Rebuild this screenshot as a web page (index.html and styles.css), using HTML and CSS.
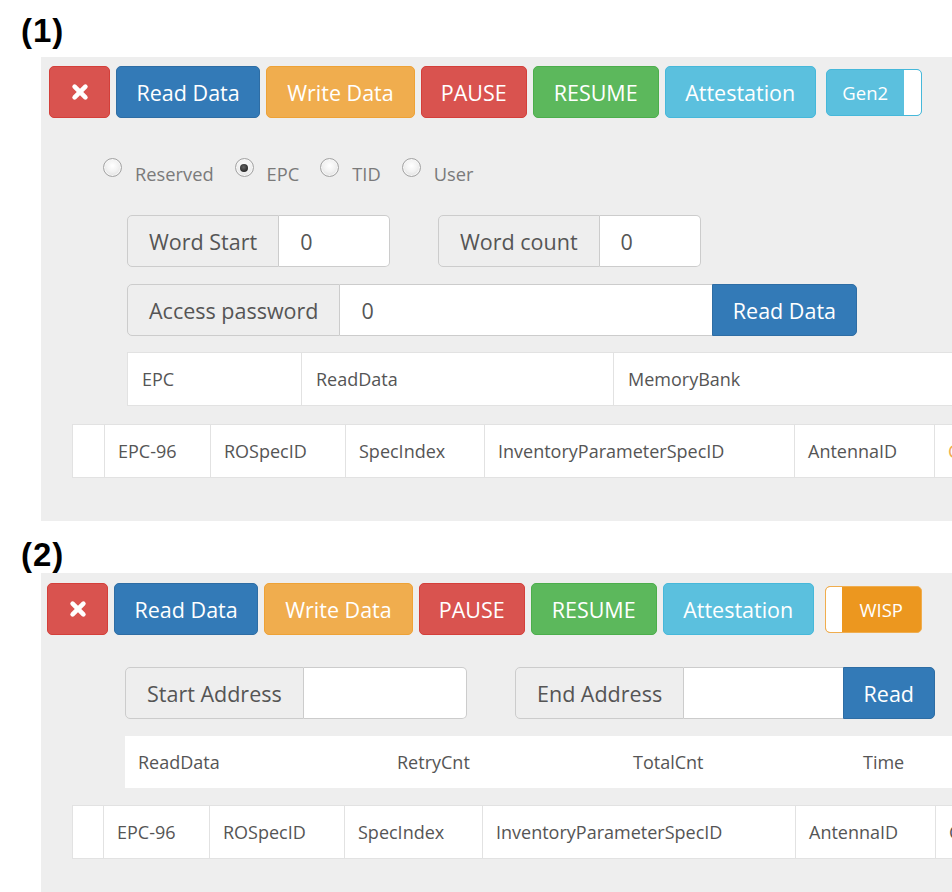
FILE: index.html
```html
<!DOCTYPE html>
<html>
<head>
<meta charset="utf-8">
<link rel="stylesheet" href="styles.css">
</head>
<body>
<div class="fig-label fig-label--1">(1)</div>
<div class="panel panel--1">
  <div class="btn-row">
    <div class="btn btn--danger btn--icon"><svg class="x-icon" width="18" height="18" viewBox="0 0 18 18"><path d="M3.6 3.6 L14.4 14.4 M14.4 3.6 L3.6 14.4" stroke="#fff" stroke-width="4.6" stroke-linecap="round"/></svg></div>
    <div class="btn btn--primary btn--read">Read Data</div>
    <div class="btn btn--warning">Write Data</div>
    <div class="btn btn--danger btn--narrow">PAUSE</div>
    <div class="btn btn--success">RESUME</div>
    <div class="btn btn--info btn--attest">Attestation</div>
    <div class="switch switch--gen2"><span class="switch-label">Gen2</span><span class="switch-knob switch-knob--right"></span></div>
  </div>

  <div class="radios">
    <label class="radio"><span class="radio-dot"></span><span class="radio-text">Reserved</span></label>
    <label class="radio"><span class="radio-dot radio-dot--on"></span><span class="radio-text">EPC</span></label>
    <label class="radio"><span class="radio-dot"></span><span class="radio-text">TID</span></label>
    <label class="radio"><span class="radio-dot"></span><span class="radio-text">User</span></label>
  </div>

  <div class="group-row group-row--words">
    <div class="igroup igroup--263"><span class="addon">Word Start</span><span class="field">0</span></div>
    <div class="igroup igroup--263"><span class="addon">Word count</span><span class="field">0</span></div>
  </div>

  <div class="group-row group-row--pass">
    <div class="igroup igroup--730"><span class="addon">Access password</span><span class="field field--mid">0</span><span class="btn btn--primary btn--append">Read Data</span></div>
  </div>

  <table class="tbl tbl--read">
    <colgroup><col style="width:174px"><col style="width:312px"><col style="width:400px"></colgroup>
    <tr><td>EPC</td><td>ReadData</td><td>MemoryBank</td></tr>
  </table>

  <table class="tbl tbl--tags">
    <colgroup><col style="width:32px"><col style="width:106px"><col style="width:135px"><col style="width:139px"><col style="width:310px"><col style="width:140px"><col style="width:200px"></colgroup>
    <tr><td></td><td>EPC-96</td><td>ROSpecID</td><td>SpecIndex</td><td>InventoryParameterSpecID</td><td>AntennaID</td><td class="hl">ChannelIndex</td></tr>
  </table>
</div>

<div class="fig-label fig-label--2">(2)</div>
<div class="panel panel--2">
  <div class="btn-row btn-row--2">
    <div class="btn btn--danger btn--icon"><svg class="x-icon" width="18" height="18" viewBox="0 0 18 18"><path d="M3.6 3.6 L14.4 14.4 M14.4 3.6 L3.6 14.4" stroke="#fff" stroke-width="4.6" stroke-linecap="round"/></svg></div>
    <div class="btn btn--primary btn--read">Read Data</div>
    <div class="btn btn--warning">Write Data</div>
    <div class="btn btn--danger btn--narrow">PAUSE</div>
    <div class="btn btn--success">RESUME</div>
    <div class="btn btn--info btn--attest">Attestation</div>
    <div class="switch switch--wisp"><span class="switch-knob switch-knob--left"></span><span class="switch-label">WISP</span></div>
  </div>

  <div class="group-row group-row--addr">
    <div class="igroup igroup--342"><span class="addon">Start Address</span><span class="field"></span></div>
    <div class="igroup igroup--420"><span class="addon">End Address</span><span class="field field--mid"></span><span class="btn btn--primary btn--append">Read</span></div>
  </div>

  <table class="tbl tbl--plain">
    <colgroup><col style="width:259px"><col style="width:236px"><col style="width:230px"><col style="width:200px"></colgroup>
    <tr><td>ReadData</td><td>RetryCnt</td><td>TotalCnt</td><td>Time</td></tr>
  </table>

  <table class="tbl tbl--tags2">
    <colgroup><col style="width:31px"><col style="width:106px"><col style="width:135px"><col style="width:138px"><col style="width:313px"><col style="width:140px"><col style="width:200px"></colgroup>
    <tr><td></td><td>EPC-96</td><td>ROSpecID</td><td>SpecIndex</td><td>InventoryParameterSpecID</td><td>AntennaID</td><td>ChannelIndex</td></tr>
  </table>
</div>
</body>
</html>
```

FILE: styles.css
```css
html, body {
  margin: 0;
  padding: 0;
  overflow: hidden;
}
body {
  width: 952px;
  height: 892px;
  background: #ffffff;
  font-family: "Open Sans", "DejaVu Sans", sans-serif;
}

.fig-label {
  font-family: "Liberation Sans", Arial, sans-serif;
  font-weight: bold;
  font-size: 33px;
  line-height: 32px;
  letter-spacing: 1px;
  color: #000;
  margin-left: 21px;
}
.fig-label--1 { padding-top: 15px; }
.fig-label--2 { margin-top: 18px; }

.panel {
  margin-left: 41px;
  width: 1100px;
  background: #eeeeee;
  display: flex;
  flex-direction: column;
  align-items: flex-start;
  box-sizing: border-box;
}
.panel--1 { margin-top: 10px; padding: 9px 0 43px; }
.panel--2 { margin-top: 2px; padding: 10px 0 60px; }

/* buttons */
.btn-row {
  display: flex;
  align-items: center;
  gap: 6px;
  margin-left: 8px;
}
.btn-row--2 { margin-left: 6px; }

.btn {
  height: 52px;
  box-sizing: border-box;
  border: 1px solid transparent;
  border-radius: 5px;
  padding: 0 20px;
  display: flex;
  align-items: center;
  justify-content: center;
  color: #fff;
  font-size: 21.5px;
  white-space: nowrap;
}
.btn--icon { padding: 0 20.5px; }
.btn--read { padding: 0 19.5px; }
.btn--narrow { padding: 0 19px; }
.btn--attest { padding: 0 19.5px; }
.btn--danger  { background: #d9534f; border-color: #d43f3a; }
.btn--primary { background: #337ab7; border-color: #2e6da4; }
.btn--warning { background: #f0ad4e; border-color: #eea236; }
.btn--success { background: #5cb85c; border-color: #4cae4c; }
.btn--info    { background: #5bc0de; border-color: #46b8da; }

.x-icon { display: block; }

/* toggle switch */
.switch {
  height: 47px;
  box-sizing: border-box;
  border: 1px solid;
  border-radius: 5px;
  display: flex;
  overflow: hidden;
  font-size: 18.5px;
  color: #fff;
}
.switch--gen2 {
  margin-left: 4px;
  width: 96px;
  background: #5bc0de;
  border-color: #46b8da;
}
.switch--wisp {
  margin-left: 5px;
  width: 97px;
  background: #ec971f;
  border-color: #f0ad4e;
}
.switch-label {
  flex: 1;
  display: flex;
  align-items: center;
  justify-content: center;
}
.switch-knob {
  background: #fff;
  width: 17px;
}
.switch-knob--right { border-radius: 0 4px 4px 0; }
.switch-knob--left { border-radius: 4px 0 0 4px; width: 16px; }

/* radios */
.radios {
  display: flex;
  align-items: flex-start;
  margin: 40px 0 0 62px;
  height: 30px;
}
.radio {
  display: flex;
  align-items: flex-start;
  margin-right: 21px;
}
.radio-dot {
  width: 19px;
  height: 19px;
  box-sizing: border-box;
  border-radius: 50%;
  border: 1px solid #a3a3a3;
  background: radial-gradient(circle at 50% 40%, #ffffff 0%, #f2f2f2 45%, #d6d6d6 100%);
  box-shadow: inset 0 0 0 1px #f7f7f7;
  display: flex;
  align-items: center;
  justify-content: center;
  margin-right: 13px;
}
.radio-dot--on::after {
  content: "";
  width: 8px;
  height: 8px;
  border-radius: 50%;
  background: radial-gradient(circle at 45% 40%, #666 0%, #2a2a2a 70%);
}
.radio-text {
  font-size: 18.3px;
  line-height: 28px;
  margin-top: 2px;
  color: #7a7a7a;
}

/* input groups */
.group-row {
  display: flex;
  gap: 48px;
  margin-left: 86px;
}
.group-row--words { margin-top: 27px; }
.group-row--pass { margin-top: 17px; }
.group-row--addr { margin-top: 32px; margin-left: 84px; }

.igroup {
  display: flex;
  height: 52px;
}
.igroup--263 { width: 263px; }
.igroup--730 { width: 730px; }
.igroup--342 { width: 342px; }
.igroup--420 { width: 420px; }

.addon {
  box-sizing: border-box;
  border: 1px solid #cccccc;
  border-radius: 5px 0 0 5px;
  background: #eeeeee;
  padding: 0 21px;
  display: flex;
  align-items: center;
  font-size: 21.5px;
  color: #555;
  white-space: nowrap;
}
.field {
  flex: 1;
  box-sizing: border-box;
  border: 1px solid #cccccc;
  border-left: 0;
  border-radius: 0 5px 5px 0;
  background: #fff;
  padding-left: 21px;
  display: flex;
  align-items: center;
  font-size: 21.5px;
  color: #555;
}
.field--mid { border-radius: 0; border-right: 0; }
.btn--append { border-radius: 0 5px 5px 0; }

/* tables */
.tbl {
  border-collapse: collapse;
  table-layout: fixed;
  background: #fff;
  font-size: 18px;
  color: #555;
}
.tbl td {
  height: 52px;
  padding: 0 13px;
  border: 1px solid #e2e2e2;
  white-space: nowrap;
  overflow: hidden;
  vertical-align: middle;
}
.tbl--read { margin: 16px 0 0 86px; width: 886px; }
.tbl--read td { padding-left: 14px; }
.tbl--tags { margin: 18px 0 0 31px; width: 1062px; }
.tbl--plain { margin: 17px 0 0 84px; width: 925px; }
.tbl--plain td { border: 0; }
.tbl--tags2 { margin: 17px 0 0 31px; width: 1063px; }
.tbl .hl { color: #f0ad4e; }
```
